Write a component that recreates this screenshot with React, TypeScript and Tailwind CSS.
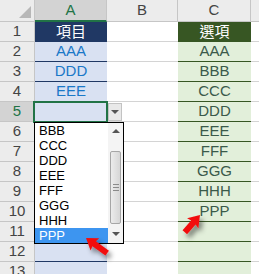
import React from 'react';

const colA = ['', 'AAA', 'DDD', 'EEE'];
const colC = ['', 'AAA', 'BBB', 'CCC', 'DDD', 'EEE', 'FFF', 'GGG', 'HHH', 'PPP'];
const listItems = ['BBB', 'CCC', 'DDD', 'EEE', 'FFF', 'GGG', 'HHH', 'PPP'];

const Arrow = ({ x, y, angle, len }: { x: number; y: number; angle: number; len: number }) => (
  // tip at (x, y); shape points along +x before rotation
  <g transform={`translate(${x} ${y}) rotate(${angle})`}>
    <polygon points={`0,0 -11,-7.5 -10,-3 ${-len},-3 ${-len},3 -10,3 -11,7.5`} fill="#f20d0d" />
  </g>
);

const App = () => {
  const rows = Array.from({ length: 13 }, (_, i) => i + 1);

  return (
    <div className="relative w-[259px] h-[274px] overflow-hidden bg-white font-['Liberation_Sans',sans-serif] text-[15px]">
      {/* column headers */}
      <div className="flex h-[22px]">
        <div className="relative w-[35px] bg-[#ececec] border-r border-b border-[#c6c6c6]">
          <div className="absolute right-[3px] bottom-[3px] w-0 h-0 border-l-[12px] border-l-transparent border-b-[12px] border-b-[#b7b7b7]" />
        </div>
        <div className="w-[72px] bg-[#d3d3d3] border-r border-[#c6c6c6] border-b-2 border-b-[#217346] flex items-center justify-center text-[#217346]">A</div>
        <div className="w-[71px] bg-[#ececec] border-r border-b border-[#c6c6c6] flex items-center justify-center text-[#444]">B</div>
        <div className="w-[73px] bg-[#ececec] border-r border-b border-[#c6c6c6] flex items-center justify-center text-[#444]">C</div>
        <div className="flex-1 bg-[#ececec] border-b border-[#c6c6c6]" />
      </div>

      {rows.map((r) => {
        const head = r === 1;
        return (
          <div key={r} className="flex h-[20px]">
            <div
              className={`w-[35px] border-r border-b border-[#c6c6c6] flex items-center justify-center ${
                r === 5 ? 'bg-[#d3d3d3] text-[#217346]' : 'bg-[#ececec] text-[#444]'
              }`}
            >
              {r}
            </div>
            <div
              className={`w-[72px] border-b border-[#203864] flex items-center justify-center ${
                head ? "bg-[#203864] text-white font-['Noto_Sans_CJK_TC',sans-serif] text-[15px]" : 'bg-[#d9e1f2] text-[#1a78c8]'
              }`}
            >
              {head ? '項目' : colA[r - 1] ?? ''}
            </div>
            <div className="w-[71px] border-b border-[#d4d4d4]" />
            <div
              className={`w-[73px] border-b border-[#375623] flex items-center justify-center ${
                head ? "bg-[#375623] text-white font-['Noto_Sans_CJK_TC',sans-serif] text-[15px]" : 'bg-[#e2efda] text-[#3a5a4a]'
              }`}
            >
              {head ? '選項' : colC[r - 1] ?? ''}
            </div>
            <div className="flex-1 border-b border-[#d4d4d4]" />
          </div>
        );
      })}

      {/* selected cell A5 */}
      <div className="absolute left-[33px] top-[101px] w-[75px] h-[22px] border-2 border-[#217346]" />

      {/* dropdown button */}
      <div className="absolute left-[108px] top-[103px] w-[14px] h-[18px] bg-[#e9e9e9] border border-[#c3c3c3] flex items-center justify-center">
        <div className="w-0 h-0 border-l-[4px] border-r-[4px] border-t-[4px] border-l-transparent border-r-transparent border-t-[#555]" />
      </div>

      {/* dropdown list */}
      <div className="absolute left-[34px] top-[122px] w-[90px] h-[122px] bg-white border border-black flex">
        <div className="w-[73px] flex flex-col">
          {listItems.map((t) => (
            <div
              key={t}
              className={`h-[15px] leading-[15px] pl-[4px] text-[13px] ${
                t === 'PPP' ? 'bg-[#3d95f0] text-white' : 'text-black'
              }`}
            >
              {t}
            </div>
          ))}
        </div>
        <div className="flex-1 flex flex-col bg-[#f4f4f4]">
          <div className="h-[15px] flex items-center justify-center">
            <div className="w-0 h-0 border-l-[4px] border-r-[4px] border-b-[4px] border-l-transparent border-r-transparent border-b-[#555]" />
          </div>
          <div className="h-[13px]" />
          <div className="mx-[2px] h-[73px] rounded-[2px] border border-[#a6a6a6] bg-gradient-to-r from-[#ececec] to-[#d6d6d6] flex flex-col items-center justify-center gap-[2px]">
            <div className="w-[6px] h-px bg-[#8a8a8a]" />
            <div className="w-[6px] h-px bg-[#8a8a8a]" />
            <div className="w-[6px] h-px bg-[#8a8a8a]" />
          </div>
          <div className="flex-1 flex items-center justify-center">
            <div className="w-0 h-0 border-l-[4px] border-r-[4px] border-t-[4px] border-l-transparent border-r-transparent border-t-[#555]" />
          </div>
        </div>
      </div>

      {/* red arrows */}
      <svg className="absolute left-0 top-0 pointer-events-none" width="259" height="274">
        <defs>
          <filter id="sh" x="-50%" y="-50%" width="200%" height="200%">
            <feDropShadow dx="3" dy="4" stdDeviation="2.5" floodColor="#000" floodOpacity="0.45" />
          </filter>
        </defs>
        <g filter="url(#sh)">
          <Arrow x={86} y={238} angle={215.5} len={26} />
          <Arrow x={200} y={215} angle={-48.6} len={23} />
        </g>
      </svg>
    </div>
  );
};

export default App;
